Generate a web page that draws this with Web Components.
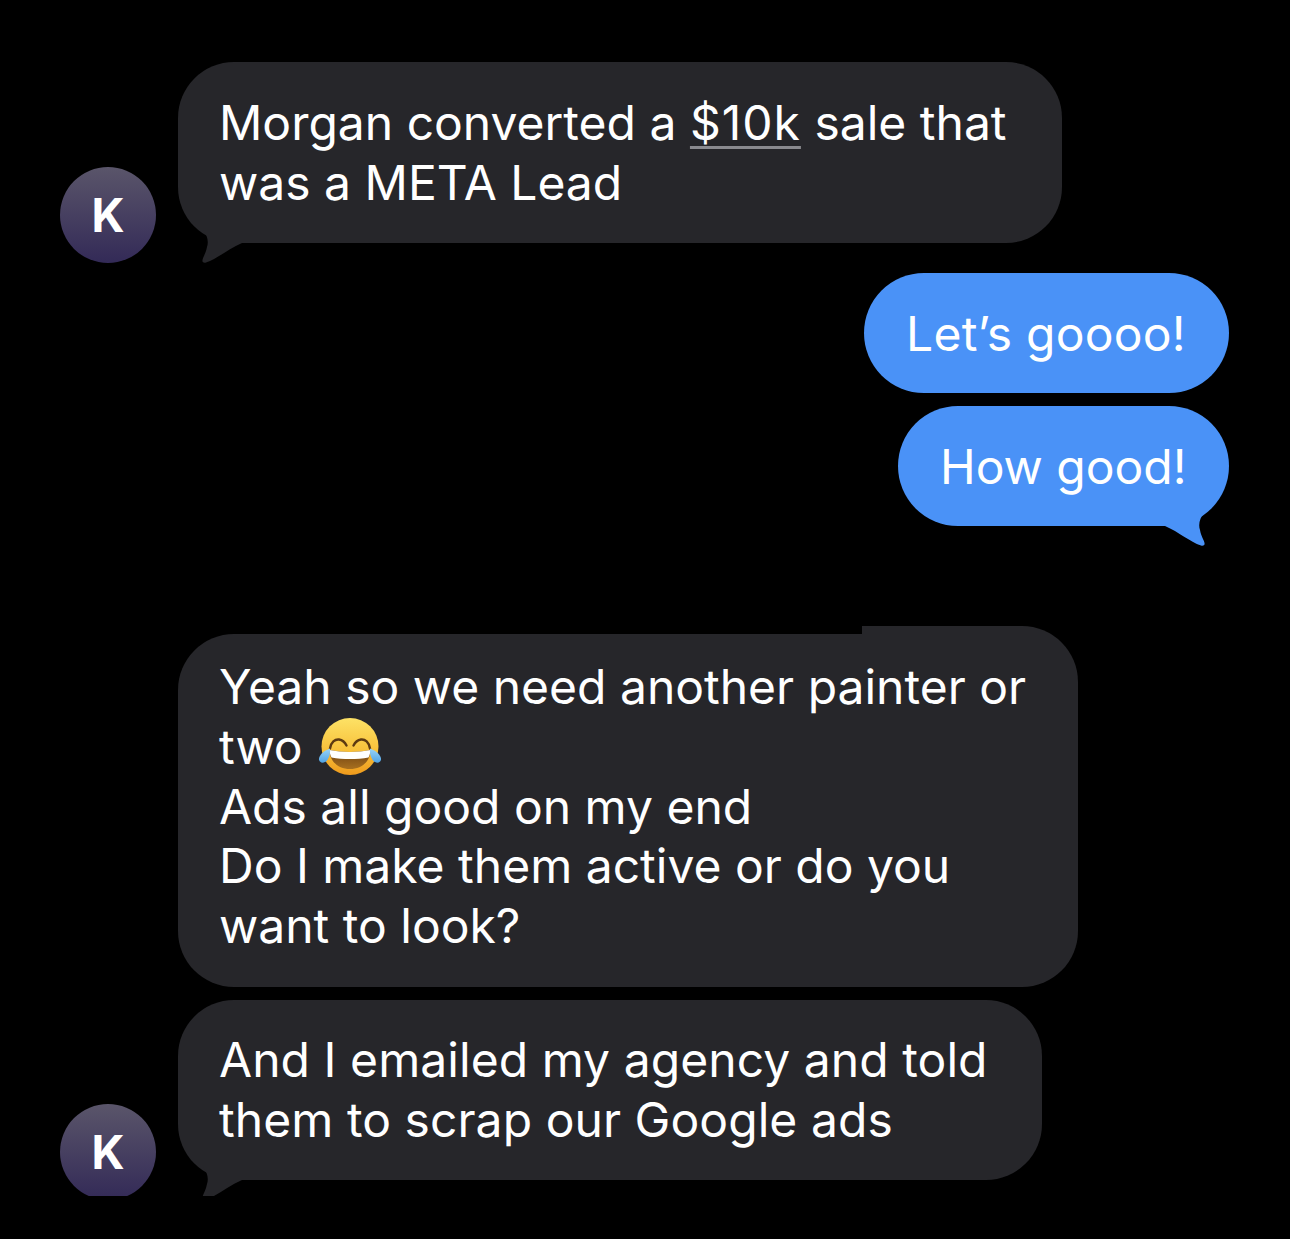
<!DOCTYPE html>
<html lang="en">
<head>
<meta charset="utf-8">
<title>Messages</title>
<style>
html, body { margin: 0; background: #000; }
</style>
</head>
<body>
<chat-thread>
    <msg-row>
        <contact-avatar slot="avatar">K</contact-avatar>
        <msg-bubble tail style="--w:884px">Morgan converted a <link-text>$10k</link-text> sale that<br>was a META Lead</msg-bubble>
    </msg-row>
    <msg-row side="out" style="--top:10px">
        <msg-bubble kind="out" style="--w:365px;--track:.25px">Let’s goooo!</msg-bubble>
    </msg-row>
    <msg-row side="out" style="--top:13px">
        <msg-bubble kind="out" tail style="--w:331px">How good!</msg-bubble>
    </msg-row>
    <msg-row indent style="--top:88px">
        <msg-bubble notch style="--w:900px;--lh:59.75px;--pad-bottom:31.25px">Yeah so we need another painter or<br>two <laugh-emoji></laugh-emoji><br>Ads all good on my end<br>Do I make them active or do you<br>want to look?</msg-bubble>
    </msg-row>
    <msg-row style="--top:13px">
        <contact-avatar slot="avatar">K</contact-avatar>
        <msg-bubble tail style="--w:864px;--track:.06px;--pad-top:30px">And I emailed my agency and told<br>them to scrap our Google ads</msg-bubble>
    </msg-row>
</chat-thread>

<script>
// ── Thread: black page, clipped where the screenshot was cropped ──
class ChatThread extends HTMLElement {
    connectedCallback() {
        const shadow = this.attachShadow({ mode: 'open' });
        shadow.innerHTML = `
<style>
:host {
    display: flex; flex-direction: column;
    box-sizing: border-box; height: 1196px; overflow: hidden;
    padding: 62px 61px 0 60px;
    background: #000; color: #fff;
    font-family: Inter, "Liberation Sans", sans-serif;
}
</style>
<slot></slot>`;
    }
}
customElements.define('chat-thread', ChatThread);

// ── Row: optional avatar + one bubble ───────────────────
class MsgRow extends HTMLElement {
    connectedCallback() {
        const shadow = this.attachShadow({ mode: 'open' });
        shadow.innerHTML = `
<style>
:host {
    display: flex; align-items: flex-end; gap: 22px;
    margin-top: var(--top, 0);
}
:host([side="out"]) { justify-content: flex-end; }
:host([indent]) { padding-left: 118px; }
</style>
<slot name="avatar"></slot>
<slot></slot>`;
    }
}
customElements.define('msg-row', MsgRow);

// ── Avatar ──────────────────────────────────────────────
class ContactAvatar extends HTMLElement {
    connectedCallback() {
        const shadow = this.attachShadow({ mode: 'open' });
        shadow.innerHTML = `
<style>
:host {
    display: flex; align-items: center; justify-content: center;
    flex: none; width: 96px; height: 96px; border-radius: 50%;
    background: linear-gradient(#5a556a, #332a57);
    color: #fff; font-size: 46px; font-weight: 700; line-height: 1;
}
</style>
<slot></slot>`;
    }
}
customElements.define('contact-avatar', ContactAvatar);

// ── Bubble with its tail ────────────────────────────────
class MsgBubble extends HTMLElement {
    connectedCallback() {
        const shadow = this.attachShadow({ mode: 'open' });
        shadow.innerHTML = `
<style>
:host {
    --fill: #26262a;
    position: relative; display: block; box-sizing: border-box; flex: none;
    width: var(--w); padding: var(--pad-top, 31px) 0 var(--pad-bottom, 30px) 41px;
    border-radius: 56px;
    background: var(--fill); color: #fff;
    font-size: 48px; line-height: var(--lh, 60px); white-space: nowrap;
    letter-spacing: var(--track, 0);
}
:host([kind="out"]) { --fill: #4a92f7; padding: 31px 0 29px 42px; border-radius: 60px; }
:host([tail]) { margin-bottom: 20px; }
:host([notch]) { padding-top: 23px; }
/* the top edge steps up 8px part-way along this bubble */
:host([notch])::before {
    content: ""; position: absolute; z-index: 0;
    top: -8px; left: 684px; right: 0; height: 80px;
    background: var(--fill); border-top-right-radius: 56px;
}
.text { position: relative; z-index: 1; }
svg { position: absolute; left: 17px; bottom: -22px; display: none; }
:host([tail]) svg { display: block; }
:host([kind="out"]) svg { left: auto; right: 17px; transform: scaleX(-1); }
</style>
<svg width="50" height="42" viewBox="0 0 50 42"><path fill="#26262a" d="M0 0L8 7C12 12 14 18 12 24C11 30 8 34 7.5 37C7 39.5 9 40 11 39.5C22 36 33 26 47 20L47 0Z"/></svg>
<span class="text"><slot></slot></span>`;
        if (this.getAttribute('kind') === 'out')
            shadow.querySelector('path').setAttribute('fill', '#4a92f7');
    }
}
customElements.define('msg-bubble', MsgBubble);

// ── Detected-link underline ─────────────────────────────
class LinkText extends HTMLElement {
    connectedCallback() {
        const shadow = this.attachShadow({ mode: 'open' });
        shadow.innerHTML = `
<style>
:host {
    display: inline;
    letter-spacing: 1px;
    text-decoration: underline #8b8b90 3px;
    text-underline-offset: 6px;
    text-decoration-skip-ink: none;
}
</style>
<slot></slot>`;
    }
}
customElements.define('link-text', LinkText);

// ── Face with tears of joy ──────────────────────────────
class LaughEmoji extends HTMLElement {
    connectedCallback() {
        const shadow = this.attachShadow({ mode: 'open' });
        shadow.innerHTML = `
<style>
:host { display: inline-block; width: 64px; height: 58px; margin-left: 2px; vertical-align: top; }
svg { display: block; overflow: visible; }
</style>
<svg width="64" height="60" viewBox="0 0 64 60">
    <defs>
        <linearGradient id="face" x1="0" y1="0" x2="0" y2="1">
            <stop offset="0" stop-color="#fde266"/>
            <stop offset=".55" stop-color="#f8c23c"/>
            <stop offset="1" stop-color="#ee9a1c"/>
        </linearGradient>
        <linearGradient id="tear" x1="0" y1="0" x2="0" y2="1">
            <stop offset="0" stop-color="#9ad4f7"/>
            <stop offset="1" stop-color="#4fa3e6"/>
        </linearGradient>
        <linearGradient id="mouth" x1="0" y1="0" x2="0" y2="1">
            <stop offset="0" stop-color="#6d3f12"/>
            <stop offset="1" stop-color="#a8701f"/>
        </linearGradient>
    </defs>
    <circle cx="32" cy="29.5" r="28.5" fill="url(#face)"/>
    <path d="M12 31.5C13 25 17 22 21 22.5C24 23 27 25.5 28.5 28.5" fill="none" stroke="#5d3a12" stroke-width="2.4" stroke-linecap="round"/>
    <path d="M52 31.5C51 25 47 22 43 22.5C40 23 37 25.5 35.5 28.5" fill="none" stroke="#5d3a12" stroke-width="2.4" stroke-linecap="round"/>
    <path d="M11.5 33C24 35.5 40 35.5 52.5 33C52.5 44 44 52 32 52C20 52 11.5 44 11.5 33Z" fill="url(#mouth)"/>
    <path d="M11.5 33C24 35.5 40 35.5 52.5 33C52.3 36 51.5 38.5 50.5 40.5C39 42.5 25 42.5 13.5 40.5C12.5 38.5 11.7 36 11.5 33Z" fill="#fff"/>
    <path d="M12 31.5C12.5 36 11.5 40 9 43.5C6.5 46.5 1.5 46.5 1 42.5C.5 38.5 6 33.5 12 31.5Z" fill="url(#tear)"/>
    <path d="M52 31.5C51.5 36 52.5 40 55 43.5C57.5 46.5 62.5 46.5 63 42.5C63.500 38.5 58 33.5 52 31.5Z" fill="url(#tear)"/>
</svg>`;
    }
}
customElements.define('laugh-emoji', LaughEmoji);
</script>
</body>
</html>
